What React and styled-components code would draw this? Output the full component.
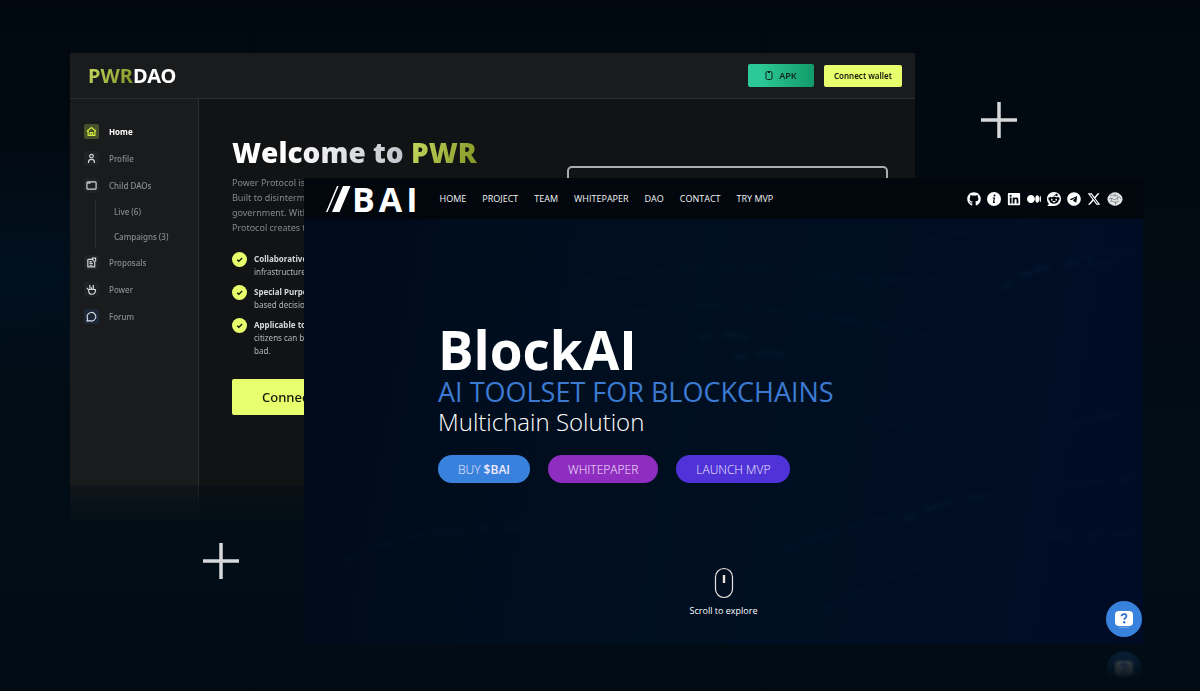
import styled, { createGlobalStyle, css } from "styled-components";
import { FaGithub, FaLinkedin, FaMedium, FaReddit, FaTelegram, FaXTwitter } from "react-icons/fa6";

const socials = [
    { label: "GitHub", icon: <FaGithub /> },
    { label: "Info", icon: <InfoIcon /> },
    { label: "LinkedIn", icon: <FaLinkedin /> },
    { label: "Medium", icon: <FaMedium /> },
    { label: "Reddit", icon: <FaReddit /> },
    { label: "Telegram", icon: <FaTelegram /> },
    { label: "X", icon: <FaXTwitter /> },
    { label: "Gecko", icon: <BallIcon /> },
];

const navLinks = ["HOME", "PROJECT", "TEAM", "WHITEPAPER", "DAO", "CONTACT", "TRY MVP"];

export default function App() {
    return (
        <>
            <GlobalStyle />
            <Stage>
                <PowerDao />
                <BlockAi />
                <PlusTop viewBox="0 0 36 36"><path d="M18 0v36M0 18h36" /></PlusTop>
                <PlusBottom viewBox="0 0 36 36"><path d="M18 0v36M0 18h36" /></PlusBottom>
            </Stage>
        </>
    );
}

function PowerDao() {
    return (
        <BackWindow>
            <BackHeader>
                <Brand><Lime>PWR</Lime>DAO</Brand>
                <HeaderActions>
                    <ApkButton type="button">
                        <svg width="8" height="9" viewBox="0 0 8 9" fill="none" stroke="currentColor">
                            <rect x="1" y=".5" width="6" height="8" rx="1.5" />
                            <path d="M3 1.5h2" />
                        </svg>
                        APK
                    </ApkButton>
                    <WalletButton type="button">Connect wallet</WalletButton>
                </HeaderActions>
            </BackHeader>
            <BackBody>
                <Sidebar>
                    <SideLink href="#home" $active><IconBox $active><HomeIcon /></IconBox>Home</SideLink>
                    <SideLink href="#profile"><IconBox><ProfileIcon /></IconBox>Profile</SideLink>
                    <SideLink href="#daos"><IconBox><FolderIcon /></IconBox>Child DAOs</SideLink>
                    <SubMenu>
                        <SubLink href="#live">Live (6)</SubLink>
                        <SubLink href="#campaigns">Campaigns (3)</SubLink>
                    </SubMenu>
                    <SideLink href="#proposals"><IconBox><ProposalIcon /></IconBox>Proposals</SideLink>
                    <SideLink href="#power"><IconBox><PowerIcon /></IconBox>Power</SideLink>
                    <SideLink href="#forum"><IconBox $tint><ForumIcon /></IconBox>Forum</SideLink>
                </Sidebar>
                <Main>
                    <Intro>
                        <Welcome><Silver>Welcome to</Silver> <Lime>PWR</Lime></Welcome>
                        <Lead>
                            Power Protocol is<br />
                            Built to disinterm<br />
                            government. With<br />
                            Protocol creates t
                        </Lead>
                        <Points>
                            <Point><CheckIcon /><p><b>Collaborative</b><br />infrastructure</p></Point>
                            <Point><CheckIcon /><p><b>Special Purpo</b><br />based decision</p></Point>
                            <Point><CheckIcon /><p><b>Applicable to</b><br />citizens can b<br />bad.</p></Point>
                        </Points>
                        <BigButton type="button">Connect</BigButton>
                    </Intro>
                    <Panel />
                </Main>
            </BackBody>
        </BackWindow>
    );
}

function BlockAi() {
    return (
        <FrontWindow>
            <FrontHeader>
                <Logo href="#top">
                    <svg width="25" height="26" viewBox="0 0 25 26">
                        <path d="M0 26 11 0h1.6L1.6 26zM6 26 17 0h7.5l-11 26z" fill="#fff" />
                    </svg>
                    BAI
                </Logo>
                <Nav>
                    {navLinks.map((text) => <NavItem href="#top" key={text}>{text}</NavItem>)}
                </Nav>
                <Socials>
                    {socials.map(({ label, icon }) => (
                        <Social href="#top" key={label} aria-label={label}>{icon}</Social>
                    ))}
                </Socials>
            </FrontHeader>
            <Hero>
                <Texture viewBox="0 0 840 424" preserveAspectRatio="none" aria-hidden="true">
                    <path d="M280 60q120-20 230-5T830 40M300 100q60-20 160-10t180 30M480 330q160-60 350-70M520 390q150-80 310-75M650 90q60-50 190-60M40 340q90-40 210-30M620 20l120-20M560 200q120 30 270-10" />
                    <path d="M395 120q30-12 60 4M430 140q40-14 70 2M700 70q30-25 90-30M600 300q40-20 90-25" strokeWidth="5" />
                </Texture>
                <Title>BlockAI</Title>
                <Tagline>AI TOOLSET FOR BLOCKCHAINS</Tagline>
                <Subtitle>Multichain Solution</Subtitle>
                <Actions>
                    <Pill type="button" $color="#3882dd">BUY <b>$BAI</b></Pill>
                    <Pill type="button" $color="#8e2dc0">WHITEPAPER</Pill>
                    <Pill type="button" $color="#4f33d8">LAUNCH MVP</Pill>
                </Actions>
                <ScrollCue href="#more">
                    <svg width="20" height="32" viewBox="0 0 20 32" fill="none" stroke="#e8e4da">
                        <rect x="1.5" y="1.5" width="17" height="29" rx="8.5" strokeWidth="1.2" />
                        <path d="M10 8v8" strokeWidth="2.4" />
                    </svg>
                    Scroll to explore
                </ScrollCue>
            </Hero>
            <ChatButton type="button" aria-label="Help"><ChatGlyph /></ChatButton>
            <ChatReflection><ChatGlyph /></ChatReflection>
        </FrontWindow>
    );
}

function HomeIcon() {
    return (
        <svg viewBox="0 0 12 12">
            <path d="M1 5.8 6 1.6l5 4.2M2.3 5.2v5h7.4v-5M4.7 10V7.2h2.6V10" />
        </svg>
    );
}

function ProfileIcon() {
    return (
        <svg viewBox="0 0 12 12">
            <circle cx="6" cy="3.4" r="2" />
            <path d="M2.8 11V9.6C2.8 7.8 4 7 6 7s3.2.8 3.2 2.6V11" />
        </svg>
    );
}

function FolderIcon() {
    return (
        <svg viewBox="0 0 12 12">
            <rect x="1" y="2" width="10" height="8" rx="1" />
            <path d="M1.5 3.3h3.5" />
        </svg>
    );
}

function ProposalIcon() {
    return (
        <svg viewBox="0 0 12 12">
            <path d="M2 2.5h5V1.2h3.5V5M2 2.5v8.3h7.5V5M3.8 5h2.5M3.8 7h3.5M3.8 9h3.5M7 2.5 9 5" />
        </svg>
    );
}

// hand with two raised fingers
function PowerIcon() {
    return (
        <svg viewBox="0 0 12 12">
            <path d="M4.2 5.5V1M8 5.5V1M6.1 5.5V3.5M1 4.2l2 2.6M2.6 6h7.6v1.600a3.600 3.600 0 0 1-7.200 0z" />
        </svg>
    );
}

function ForumIcon() {
    return (
        <svg viewBox="0 0 12 12">
            <path d="M1.2 11l.6-2.6A4.7 4.7 0 1 1 4 10.5z" />
        </svg>
    );
}

function CheckIcon() {
    return (
        <CheckMark viewBox="0 0 16 16">
            <circle cx="8" cy="8" r="8" fill="#e8ff6d" />
            <path d="m5.5 8.2 1.8 1.7L10.8 6.5" fill="none" stroke="#16180c" strokeWidth="1.4" />
        </CheckMark>
    );
}

function InfoIcon() {
    return (
        <svg width="14" height="14" viewBox="0 0 14 14">
            <circle cx="7" cy="7" r="7" fill="#fff" />
            <circle cx="7.5" cy="3.6" r="1" fill="#02070d" />
            <path d="M5.7 6h1.7L6.5 10.4h1.4" fill="none" stroke="#02070d" strokeWidth="1.2" />
        </svg>
    );
}

function BallIcon() {
    return (
        <svg width="16" height="14" viewBox="0 0 16 14">
            <path d="M4 1.5Q8-.8 12 1.5q4 2.500 3.500 6.500-1 3.500-3.500 4.500-4 2.500-8 0Q1 11 .5 8 0 4 4 1.500z" fill="#e3e5e6" />
            <path d="M3 4q2-2 4-.5T11 3M2 7q2-2 4 0t4-1 4 1M3 10q2-2 4 0t5-1M8 1.500v3M5 5.500 4 9M11 5l-1 3.500M8.500 9v3.500" fill="none" stroke="#6d7378" strokeWidth=".7" />
        </svg>
    );
}

function ChatGlyph() {
    return (
        <svg width="20" height="20" viewBox="0 0 20 20">
            <rect x="1" y="2" width="18" height="15" rx="4" fill="#fff" />
            <path d="M5 18.300h10" stroke="#7fa9d8" strokeWidth="1" />
            <path d="M7.500 7.300c.2-3 5-3 5-.2 0 1.900-2.300 1.800-2.300 3.700" fill="none" stroke="#2f76ce" strokeWidth="1.800" />
            <circle cx="10.200" cy="13.300" r="1.200" fill="#2f76ce" />
        </svg>
    );
}

const GlobalStyle = createGlobalStyle`
  * {
    box-sizing: border-box;
  }
  body {
    margin: 0;
    background: #010b14;
    color: #fff;
    font-family: "Noto Sans", sans-serif;
  }
  h1, h2, p, ul {
    margin: 0;
    padding: 0;
  }
  a {
    color: inherit;
    text-decoration: none;
  }
  button {
    border: none;
    font-family: inherit;
    cursor: pointer;
  }
`;

const Stage = styled.div`
  position: relative;
  min-height: 100vh;
  display: grid;
  overflow: hidden;
  background:
    radial-gradient(ellipse at 0% 40%, #00101f 0%, transparent 24%),
    linear-gradient(180deg, #01080f 0%, #020a12 35%, #010e17 80%, #010b13 100%);
`;

const plus = css`
  position: absolute;
  width: 36px;
  height: 36px;
  fill: none;
  stroke: #d6d8da;
  stroke-width: 3.5;
`;

const PlusTop = styled.svg`
  ${plus}
  right: 183px;
  top: 102px;
`;

const PlusBottom = styled.svg`
  ${plus}
  left: 203px;
  bottom: 112px;
`;

const BackWindow = styled.section`
  grid-area: 1 / 1;
  margin: 53px 285px 161px 70px;
  display: flex;
  flex-direction: column;
  background: #121314;
  mask-image: linear-gradient(#000 calc(100% - 45px), rgba(0, 0, 0, 0.6) calc(100% - 44px), transparent);
`;

const BackHeader = styled.header`
  display: flex;
  align-items: center;
  justify-content: space-between;
  height: 46px;
  padding: 0 13px 0 18px;
  background: #1a1b1d;
  border-bottom: 1px solid #2b2d2f;
`;

const Brand = styled.div`
  font-size: 20px;
  font-weight: 700;
`;

const Lime = styled.span`
  color: transparent;
  background: linear-gradient(120deg, #c8dc62, #7f9222);
  background-clip: text;
`;

const Silver = styled.span`
  color: transparent;
  background: linear-gradient(90deg, #fff 30%, #c3c5cc);
  background-clip: text;
`;

const HeaderActions = styled.div`
  display: flex;
  align-items: center;
  gap: 10px;
`;

const ApkButton = styled.button`
  display: flex;
  align-items: center;
  justify-content: center;
  gap: 6px;
  width: 66px;
  height: 23px;
  border-radius: 2px;
  color: #10241f;
  background: linear-gradient(90deg, #2cc895 20%, #129a6a);
  font-size: 9px;
  font-weight: 600;
`;

const WalletButton = styled.button`
  height: 22px;
  padding: 0 10px;
  border-radius: 2px;
  color: #14160a;
  background: #e8ff6d;
  font-size: 8px;
  font-weight: 600;
`;

const BackBody = styled.div`
  flex: 1;
  display: flex;
`;

const Sidebar = styled.nav`
  display: flex;
  flex-direction: column;
  width: 129px;
  padding: 19px 0 0 14px;
  background: #1a1b1d;
  border-right: 1px solid #2b2d2f;
`;

const SideLink = styled.a`
  display: flex;
  align-items: center;
  gap: 10px;
  height: 27px;
  font-size: 8px;
  font-weight: ${(props) => (props.$active ? 700 : 500)};
  color: ${(props) => (props.$active ? "#fff" : "#8a8c8f")};
`;

const IconBox = styled.span`
  display: grid;
  place-items: center;
  width: 15px;
  height: 15px;
  border-radius: 2px;
  background: ${(props) => (props.$active ? "#47502a" : props.$tint ? "#1c2838" : "#202224")};
  svg {
    width: 11px;
    height: 11px;
    fill: none;
    stroke: ${(props) => (props.$active ? "#d3ee3c" : "#d4d6d9")};
    stroke-width: 1.3;
  }
`;

const SubMenu = styled.div`
  display: flex;
  flex-direction: column;
  margin-left: 11px;
  padding-left: 18px;
  border-left: 1px solid #2b2d2f;
`;

const SubLink = styled.a`
  font-size: 8px;
  font-weight: 500;
  line-height: 25px;
  color: #8a8c8f;
`;

const Main = styled.main`
  flex: 1;
  display: flex;
  justify-content: space-between;
  padding: 35px 27px 0 33px;
`;

const Intro = styled.div`
  width: 300px;
  white-space: nowrap;
`;

const Welcome = styled.h2`
  font-family: "Open Sans", sans-serif;
  font-size: 28px;
  font-weight: 800;
  line-height: 36px;
`;

const Lead = styled.p`
  margin-top: 5px;
  font-size: 9px;
  line-height: 15px;
  color: #85878a;
`;

const Points = styled.ul`
  display: flex;
  flex-direction: column;
  gap: 7px;
  margin-top: 17px;
  list-style: none;
`;

const Point = styled.li`
  display: flex;
  gap: 7px;
  font-size: 8px;
  line-height: 13px;
  color: #b4b6b9;
  b {
    color: #d6d8da;
  }
`;

const CheckMark = styled.svg`
  width: 15px;
  height: 15px;
`;

const BigButton = styled.button`
  height: 36px;
  padding: 0 30px;
  margin-top: 22px;
  border-radius: 2px;
  color: #14160a;
  background: #e8ff6d;
  font-size: 13px;
  font-weight: 500;
`;

const Panel = styled.div`
  width: 321px;
  height: 180px;
  margin-top: 32px;
  border: 2px solid #a9adb0;
  border-radius: 5px;
`;

const FrontWindow = styled.section`
  position: relative;
  grid-area: 1 / 1;
  margin: 178px 57px 47px 304px;
  display: flex;
  flex-direction: column;
  font-family: "Open Sans", sans-serif;
`;

const FrontHeader = styled.header`
  display: flex;
  align-items: center;
  height: 41px;
  padding: 0 20px 0 22px;
  background: #02070d;
`;

const Logo = styled.a`
  display: flex;
  align-items: center;
  gap: 1px;
  font-size: 34px;
  font-weight: 700;
  line-height: 40px;
  letter-spacing: 4px;
`;

const Nav = styled.nav`
  display: flex;
  gap: 16px;
  margin-left: 18px;
`;

const NavItem = styled.a`
  font-size: 9px;
  line-height: 14px;
  color: #f2f4f6;
`;

const Socials = styled.div`
  display: flex;
  align-items: center;
  gap: 6px;
  margin-left: auto;
`;

const Social = styled.a`
  display: flex;
  font-size: 14px;
`;

const Hero = styled.div`
  position: relative;
  flex: 1;
  display: flex;
  flex-direction: column;
  padding: 106px 134px 26px;
  background: linear-gradient(100deg, #000b1b 0%, #000f20 45%, #000c25 100%);
`;

const Texture = styled.svg`
  position: absolute;
  inset: 0;
  width: 100%;
  height: 100%;
  fill: none;
  stroke: #12344f;
  stroke-width: 2;
  stroke-dasharray: 14 9 30 16;
  opacity: 0.2;
  filter: blur(2px);
`;

const Title = styled.h1`
  position: relative;
  font-size: 53px;
  font-weight: 700;
  line-height: 50px;
`;

const Tagline = styled.p`
  position: relative;
  font-size: 27px;
  line-height: 33px;
  color: #3c7ad2;
`;

const Subtitle = styled.p`
  position: relative;
  font-size: 24px;
  font-weight: 300;
  line-height: 28px;
`;

const Actions = styled.div`
  position: relative;
  display: flex;
  gap: 18px;
  margin-top: 19px;
`;

const Pill = styled.button`
  height: 28px;
  padding: 0 20px;
  border-radius: 14px;
  color: #f3e9ff;
  background: ${(props) => props.$color};
  font-size: 12px;
  font-weight: 300;
  b {
    font-weight: 600;
  }
`;

const ScrollCue = styled.a`
  position: relative;
  display: flex;
  flex-direction: column;
  align-items: center;
  gap: 5px;
  margin-top: auto;
  font-size: 9px;
  line-height: 14px;
`;

const ChatButton = styled.button`
  position: absolute;
  right: 1px;
  bottom: 7px;
  display: grid;
  place-items: center;
  width: 36px;
  height: 36px;
  padding: 0;
  border-radius: 50%;
  background: #3882dd;
`;

const ChatReflection = styled.div`
  position: absolute;
  right: 1px;
  bottom: -43px;
  display: grid;
  place-items: center;
  width: 36px;
  height: 36px;
  border-radius: 50%;
  background: #1c4c86;
  opacity: 0.3;
  filter: blur(1px);
  mask-image: linear-gradient(#000, transparent 85%);
`;
